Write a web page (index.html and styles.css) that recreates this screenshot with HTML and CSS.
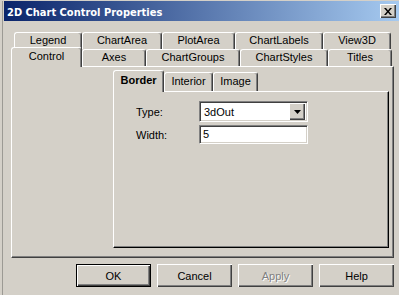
FILE: index.html
```html
<!DOCTYPE html>
<html>
  <head>
    <title>2D Chart Control Properties</title>
    <link rel="stylesheet" href="styles.css">
  </head>
  <body>
    <div class="window">
      <div class="titlebar">
        <span class="title">2D Chart Control Properties</span>
        <div class="close">
          <svg width="8" height="7" viewBox="0 0 8 7">
            <path d="M0 0h2l2 2.5l2-2.5h2l-3 3.5l3 3.5h-2l-2-2.5l-2 2.5h-2l3-3.5z" fill="#000"/>
          </svg>
        </div>
      </div>

      <div class="tab-row back">
        <div class="tab t-legend">Legend</div>
        <div class="tab t-chartarea">ChartArea</div>
        <div class="tab t-plotarea">PlotArea</div>
        <div class="tab t-chartlabels">ChartLabels</div>
        <div class="tab t-view3d">View3D</div>
      </div>
      <div class="tab-row front">
        <div class="tab selected t-control">Control</div>
        <div class="tab t-axes">Axes</div>
        <div class="tab t-chartgroups">ChartGroups</div>
        <div class="tab t-chartstyles">ChartStyles</div>
        <div class="tab t-titles">Titles</div>
      </div>

      <div class="panel">
        <div class="subtabs">
          <div class="tab selected t-border">Border</div>
          <div class="tab t-interior">Interior</div>
          <div class="tab t-image">Image</div>
        </div>
        <div class="subpanel">
          <div class="field">
            <label class="field-label">Type:</label>
            <div class="combo">
              <span class="combo-text">3dOut</span>
              <div class="combo-btn">
                <svg width="7" height="4" viewBox="0 0 7 4"><path d="M0 0h7l-3.5 4z" fill="#000"/></svg>
              </div>
            </div>
          </div>
          <div class="field">
            <label class="field-label">Width:</label>
            <div class="textbox">5</div>
          </div>
        </div>
      </div>

      <div class="buttons">
        <div class="btn default">OK</div>
        <div class="btn">Cancel</div>
        <div class="btn disabled">Apply</div>
        <div class="btn">Help</div>
      </div>
    </div>
  </body>
</html>
```

FILE: styles.css
```css
body {
  margin: 0;
  background-color: #d4d0c8;
  font-family: "Liberation Sans", Arial, sans-serif;
  font-size: 11px;
  color: #000;
  overflow: hidden;
}

.window {
  width: 395px;
  height: 295px;
  border-left: 4px solid #d4d0c8;
  background-color: #d4d0c8;
  position: relative;
}

.window::before {
  content: "";
  position: absolute;
  left: -2px;
  top: 0;
  width: 1px;
  height: 295px;
  background-color: #9c9a94;
}

/* title bar */
.titlebar {
  margin-top: 1px;
  height: 20px;
  display: flex;
  align-items: center;
  justify-content: space-between;
  background: linear-gradient(to right, #0a246a, #a6caf0);
}

.title {
  color: #fff;
  font-family: "DejaVu Sans Condensed", "DejaVu Sans", sans-serif;
  font-weight: bold;
  font-size: 11px;
  padding-left: 3px;
  padding-top: 2px;
}

.close {
  width: 16px;
  height: 14px;
  margin-right: 3px;
  box-sizing: border-box;
  display: flex;
  align-items: center;
  justify-content: center;
  background-color: #d4d0c8;
  box-shadow: inset 1px 1px #fff, inset -1px -1px #404040, inset -2px -2px #808080;
}

/* tabs */
.tab-row {
  display: flex;
  align-items: flex-start;
}

.tab {
  height: 17px;
  box-sizing: border-box;
  border-top: 1px solid #fff;
  border-left: 1px solid #fff;
  border-right: 1px solid #404040;
  border-top-left-radius: 3px;
  border-top-right-radius: 3px;
  box-shadow: inset -1px 0 #808080;
  background-color: #d4d0c8;
  text-align: center;
  line-height: 15px;
  white-space: nowrap;
}

.tab-row.back {
  margin-top: 11px;
  margin-left: 10px;
  height: 17px;
}

.tab-row.front {
  margin-top: -2px;
  margin-left: 7px;
  height: 19px;
  position: relative;
  z-index: 1;
}

.tab-row .tab {
  margin-top: 2px;
}

.tab-row .tab.selected {
  margin-top: 0;
  height: 20px;
  line-height: 17px;
}

.tab-row.back .tab {
  margin-top: 0;
}

.t-legend { width: 68px; }
.t-chartarea { width: 80px; }
.t-plotarea { width: 73px; }
.t-chartlabels { width: 88px; }
.t-view3d { width: 68px; }

.t-control { width: 71px; }
.t-axes { width: 64px; }
.t-chartgroups { width: 94px; }
.t-chartstyles { width: 88px; }
.t-titles { width: 64px; }

/* outer panel */
.panel {
  margin-left: 7px;
  width: 383px;
  height: 192px;
  box-sizing: border-box;
  border-top: 1px solid #fff;
  border-left: 1px solid #fff;
  border-right: 1px solid #404040;
  border-bottom: 1px solid #404040;
  box-shadow: inset -1px -1px #808080;
}

.subtabs {
  display: flex;
  align-items: flex-start;
  margin-top: 3px;
  margin-left: 101px;
  height: 21px;
  position: relative;
  z-index: 1;
}

.subtabs .tab {
  margin-top: 2px;
  height: 19px;
  line-height: 17px;
}

.subtabs .tab.selected {
  margin-top: 0;
  height: 22px;
  line-height: 19px;
  font-weight: bold;
}

.t-border { width: 51px; }
.t-interior { width: 49px; }
.t-image { width: 45px; }

.subpanel {
  margin-left: 101px;
  width: 276px;
  height: 157px;
  box-sizing: border-box;
  border-top: 1px solid #fff;
  border-left: 1px solid #fff;
  border-right: 1px solid #000;
  border-bottom: 1px solid #000;
  box-shadow: inset -1px -1px #808080;
  padding-top: 9px;
  padding-left: 22px;
}

.field {
  display: flex;
  align-items: center;
  margin-bottom: 3px;
}

.field-label {
  width: 63px;
}

.combo, .textbox {
  width: 109px;
  box-sizing: border-box;
  background-color: #fff;
  border-top: 1px solid #808080;
  border-left: 1px solid #808080;
  border-right: 1px solid #fff;
  border-bottom: 1px solid #fff;
  box-shadow: inset 1px 1px #404040, inset -1px -1px #d4d0c8;
}

.combo {
  height: 21px;
  display: flex;
  align-items: center;
  justify-content: space-between;
  padding: 2px;
}

.combo-text {
  padding-left: 2px;
}

.combo-btn {
  width: 16px;
  height: 17px;
  box-sizing: border-box;
  display: flex;
  align-items: center;
  justify-content: center;
  background-color: #d4d0c8;
  box-shadow: inset 1px 1px #fff, inset -1px -1px #404040, inset -2px -2px #808080;
}

.textbox {
  height: 19px;
  line-height: 17px;
  padding-left: 3px;
}

/* buttons */
.buttons {
  display: flex;
  gap: 6px;
  margin-top: 6px;
  margin-left: 72px;
}

.btn {
  width: 75px;
  height: 23px;
  box-sizing: border-box;
  display: flex;
  align-items: center;
  justify-content: center;
  box-shadow: inset 1px 1px #fff, inset -1px -1px #404040, inset -2px -2px #808080;
}

.btn.default {
  border: 1px solid #000;
}

.btn.disabled {
  color: #808080;
  text-shadow: 1px 1px #fff;
}
```
